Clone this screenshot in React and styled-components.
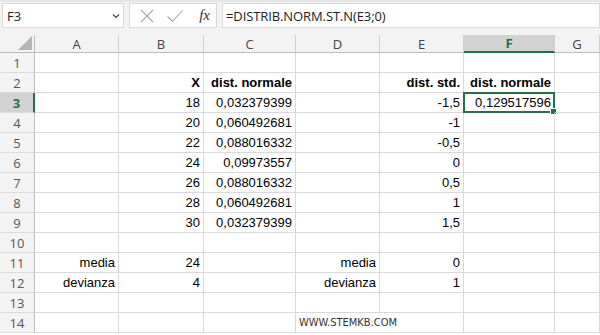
import React from 'react';
import styled, { createGlobalStyle } from 'styled-components';

const GlobalStyle = createGlobalStyle`
  html, body {
    margin: 0;
    padding: 0;
    background: #ffffff;
    overflow: hidden;
  }
  body {
    font-family: "Liberation Sans", Arial, sans-serif;
  }
`;

const green = '#217346';
const grid = '#d9d9d9';

// Formula bar
const FormulaBar = styled.div`
  display: flex;
  align-items: flex-start;
  gap: 5px;
  height: 35px;
  padding: 1px 0 0 2px;
  box-sizing: border-box;
  background: #f3f3f3;
  border-top: 2px solid #e6e6e6;
`;

const Box = styled.div`
  display: flex;
  align-items: center;
  height: 25px;
  box-sizing: border-box;
  background: #ffffff;
  border: 1px solid #dadada;
  width: ${(p) => p.$width || 'auto'};
  flex: ${(p) => (p.$grow ? 1 : 'none')};
  padding: ${(p) => p.$pad || '0'};
  justify-content: ${(p) => p.$justify || 'flex-start'};
`;

const NameText = styled.span`
  flex: 1;
  font-family: "Open Sans", "Noto Sans", sans-serif;
  font-size: 13px;
  color: #222;
`;

const FormulaText = styled.span`
  font-family: "Open Sans", "Noto Sans", sans-serif;
  font-size: 13px;
  color: #222;
  letter-spacing: -0.1px;
`;

const Fx = styled.span`
  font-family: "Liberation Serif", "Times New Roman", serif;
  font-style: italic;
  font-size: 15px;
  color: #333;
  margin-left: 4px;
`;

// Sheet
const Sheet = styled.div`
  display: grid;
  grid-template-columns: 35px 84px 85px 92px 84px 84px 91px 1fr;
  grid-auto-rows: 20px;
  grid-template-rows: 18px;
`;

const ColHead = styled.div`
  display: flex;
  align-items: center;
  justify-content: center;
  box-sizing: border-box;
  background: ${(p) => (p.$active ? '#d2d2d2' : '#f3f3f3')};
  color: ${(p) => (p.$active ? green : '#444')};
  font-weight: ${(p) => (p.$active ? 700 : 400)};
  font-family: "Open Sans", "Noto Sans", sans-serif;
  font-size: 13px;
  border-right: 1px solid #cfcfcf;
  border-bottom: ${(p) => (p.$active ? `2px solid ${green}` : '1px solid #bdbdbd')};
`;

const Corner = styled.div`
  position: relative;
  background: #f3f3f3;
  box-sizing: border-box;
  border-right: 1px solid #bdbdbd;
  border-bottom: 1px solid #bdbdbd;
`;

const Triangle = styled.div`
  position: absolute;
  right: 2px;
  bottom: 2px;
  width: 14px;
  height: 14px;
  background: #b5b5b5;
  clip-path: polygon(100% 0, 100% 100%, 0 100%);
`;

const RowHead = styled.div`
  display: flex;
  align-items: center;
  justify-content: center;
  box-sizing: border-box;
  background: ${(p) => (p.$active ? '#d2d2d2' : '#f3f3f3')};
  color: ${(p) => (p.$active ? green : '#555')};
  font-weight: ${(p) => (p.$active ? 700 : 400)};
  font-family: "Open Sans", "Noto Sans", sans-serif;
  font-size: 13px;
  padding-top: 1px;
  border-right: ${(p) => (p.$active ? `2px solid ${green}` : '1px solid #bdbdbd')};
  border-bottom: 1px solid #dcdcdc;
`;

const Cell = styled.div`
  position: relative;
  display: flex;
  align-items: flex-end;
  justify-content: ${(p) => (p.$left ? 'flex-start' : 'flex-end')};
  box-sizing: border-box;
  padding: 0 3px 1px 3px;
  border-right: ${(p) => (p.$overflow ? 'none' : `1px solid ${grid}`)};
  border-bottom: 1px solid ${grid};
  font-size: ${(p) => (p.$small ? '11px' : '13px')};
  font-family: ${(p) => (p.$small ? '"DejaVu Sans Condensed", "DejaVu Sans", sans-serif' : '"Liberation Sans", Arial, sans-serif')};
  font-weight: ${(p) => (p.$bold ? 700 : 400)};
  color: ${(p) => (p.$small ? '#333' : '#000')};
  white-space: nowrap;
  overflow: visible;
  line-height: 16px;
`;

const Selection = styled.div`
  position: absolute;
  left: -1px;
  top: -1px;
  right: -1px;
  bottom: -1px;
  border: 2px solid ${green};
  pointer-events: none;

  &::after {
    content: '';
    position: absolute;
    right: -4px;
    bottom: -4px;
    width: 5px;
    height: 5px;
    background: ${green};
    border: 1px solid #fff;
  }
`;

const columns = ['A', 'B', 'C', 'D', 'E', 'F', 'G'];

const rows = [
  {},
  { B: 'X', C: 'dist. normale', E: 'dist. std.', F: 'dist. normale', bold: true },
  { B: '18', C: '0,032379399', E: '-1,5', F: '0,129517596' },
  { B: '20', C: '0,060492681', E: '-1' },
  { B: '22', C: '0,088016332', E: '-0,5' },
  { B: '24', C: '0,09973557', E: '0' },
  { B: '26', C: '0,088016332', E: '0,5' },
  { B: '28', C: '0,060492681', E: '1' },
  { B: '30', C: '0,032379399', E: '1,5' },
  {},
  { A: 'media', B: '24', D: 'media', E: '0' },
  { A: 'devianza', B: '4', D: 'devianza', E: '1' },
  {},
  { D: 'WWW.STEMKB.COM', note: true },
];

const Cross = () => (
  <svg width="16" height="16" viewBox="0 0 16 16">
    <path d="M2 2 L14 14 M14 2 L2 14" stroke="#a8a8a8" strokeWidth="1.1" fill="none" />
  </svg>
);

const Check = () => (
  <svg width="18" height="16" viewBox="0 0 18 16">
    <path d="M1.5 8.5 L6.5 13.5 L16.5 2.5" stroke="#a8a8a8" strokeWidth="1.1" fill="none" />
  </svg>
);

const Chevron = () => (
  <svg width="8" height="6" viewBox="0 0 8 6">
    <path d="M1 1.5 L4 4.5 L7 1.5" stroke="#444" strokeWidth="1.2" fill="none" />
  </svg>
);

const App = () => {
  return (
    <>
      <GlobalStyle />
      <FormulaBar>
        <Box $width="122px" $pad="0 3px 0 4px">
          <NameText>F3</NameText>
          <Chevron />
        </Box>
        <Box $width="88px" $pad="0 6px 0 9px" $justify="space-between">
          <Cross />
          <Check />
          <Fx>fx</Fx>
        </Box>
        <Box $grow $pad="0 0 0 3px">
          <FormulaText>=DISTRIB.NORM.ST.N(E3;0)</FormulaText>
        </Box>
      </FormulaBar>
      <Sheet>
        <Corner>
          <Triangle />
        </Corner>
        {columns.map((c) => (
          <ColHead key={c} $active={c === 'F'}>
            {c}
          </ColHead>
        ))}
        {rows.map((row, i) => (
          <React.Fragment key={i}>
            <RowHead $active={i === 2}>{i + 1}</RowHead>
            {columns.map((c) => (
              <Cell
                key={c}
                $bold={row.bold}
                $left={row.note}
                $small={row.note}
                $overflow={row.note && c === 'D'}
              >
                {row[c]}
                {i === 2 && c === 'F' && <Selection />}
              </Cell>
            ))}
          </React.Fragment>
        ))}
      </Sheet>
    </>
  );
};

export default App;
